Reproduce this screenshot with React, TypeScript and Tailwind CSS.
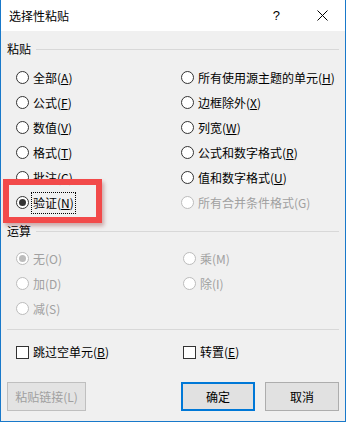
import React from "react";

const FONT = { fontFamily: '"Noto Sans CJK SC", "Noto Sans", sans-serif' };

type Item = { text: string; mnem?: string; checked?: boolean; disabled?: boolean; focus?: boolean };

function Label({ text, k }: { text: string; k?: string }) {
  if (!k) return <>{text}</>;
  return (
    <>
      {text}(<u className="underline-offset-[1px]">{k}</u>)
    </>
  );
}

function Radio({ text, mnem, checked, disabled, focus }: Item) {
  return (
    <div className="flex h-[25px] items-center">
      <span
        className={`flex h-[13px] w-[13px] shrink-0 items-center justify-center rounded-full border ${
          disabled ? "border-[#bcbcbc] bg-white" : "border-[#333333] bg-white"
        }`}
      >
        {checked && (
          <span className={`h-[7px] w-[7px] rounded-full ${disabled ? "bg-[#bcbcbc]" : "bg-[#333333]"}`} />
        )}
      </span>
      <span
        className={`ml-[3px] px-[1px] text-[12px] leading-[18px] ${disabled ? "text-[#a0a0a0]" : "text-black"} ${
          focus ? "py-[1px] outline outline-1 outline-dotted outline-black" : ""
        }`}
      >
        <Label text={text} k={mnem} />
      </span>
    </div>
  );
}

function Check({ text, mnem }: { text: string; mnem: string }) {
  return (
    <div className="flex h-[20px] items-center">
      <span className="h-[13px] w-[13px] shrink-0 border border-[#333333] bg-white" />
      <span className="ml-[4px] text-[12px] leading-[18px] text-black">
        <Label text={text} k={mnem} />
      </span>
    </div>
  );
}

function GroupLabel({ text }: { text: string }) {
  return (
    <div className="flex h-[16px] items-center pl-[6px] pr-[6px]">
      <span className="text-[12px] leading-[16px] text-black">{text}</span>
      <span className="ml-[5px] h-px flex-1 bg-[#d8d8d8]" />
    </div>
  );
}

export default function App() {
  return (
    <div className="relative flex h-[422px] w-[346px] flex-col border-x border-b border-[#1979ca] bg-[#f0f0f0]" style={FONT}>
      {/* title bar */}
      <div className="flex h-[31px] items-center bg-white pl-[8px]">
        <span className="text-[12px] leading-[16px] text-black">选择性粘贴</span>
        <span className="ml-auto text-[13px] leading-[16px] text-black" style={{ fontFamily: '"Liberation Sans", sans-serif' }}>
          ?
        </span>
        <svg className="ml-[37px] mr-[17px]" width="11" height="11" viewBox="0 0 11 11">
          <path d="M0.5 0.5 L10.5 10.5 M10.5 0.5 L0.5 10.5" stroke="#000" strokeWidth="1" />
        </svg>
      </div>

      <div className="pt-[10px]">
        <GroupLabel text="粘贴" />
      </div>

      <div className="mt-[8px] grid grid-cols-[165px_1fr] pl-[15px]">
        <div className="flex flex-col">
          <Radio text="全部" mnem="A" />
          <Radio text="公式" mnem="F" />
          <Radio text="数值" mnem="V" />
          <Radio text="格式" mnem="T" />
          <Radio text="批注" mnem="C" />
          <Radio text="验证" mnem="N" checked focus />
        </div>
        <div className="flex flex-col">
          <Radio text="所有使用源主题的单元" mnem="H" />
          <Radio text="边框除外" mnem="X" />
          <Radio text="列宽" mnem="W" />
          <Radio text="公式和数字格式" mnem="R" />
          <Radio text="值和数字格式" mnem="U" />
          <Radio text="所有合并条件格式(G)" disabled />
        </div>
      </div>

      <div className="mt-[8px]">
        <GroupLabel text="运算" />
      </div>

      <div className="mt-[7px] grid grid-cols-[167px_1fr] pl-[15px]">
        <div className="flex flex-col">
          <Radio text="无(O)" disabled checked />
          <Radio text="加(D)" disabled />
          <Radio text="减(S)" disabled />
        </div>
        <div className="flex flex-col">
          <Radio text="乘(M)" disabled />
          <Radio text="除(I)" disabled />
        </div>
      </div>

      <div className="mx-[6px] mt-[8px] h-px bg-[#d8d8d8]" />

      <div className="mt-[12px] grid grid-cols-[167px_1fr] pl-[15px]">
        <Check text="跳过空单元" mnem="B" />
        <Check text="转置" mnem="E" />
      </div>

      <div className="mt-[20px] flex items-center pl-[6px] pr-[6px]">
        <button className="h-[29px] w-[79px] border border-[#bfbfbf] bg-[#e3e3e3] text-[12px] text-[#a0a0a0]">
          粘贴链接(L)
        </button>
        <button className="ml-auto h-[29px] w-[74px] border-2 border-[#0078d7] bg-[#e1e1e1] text-[12px] text-black">
          确定
        </button>
        <button className="ml-[10px] h-[29px] w-[74px] border border-[#adadad] bg-[#e1e1e1] text-[12px] text-black">
          取消
        </button>
      </div>

      {/* annotation highlight */}
      <div className="pointer-events-none absolute left-[2px] top-[179px] h-[44px] w-[99px] border-[6px] border-[#f24a4a] shadow-[2px_3px_4px_rgba(120,0,0,0.3)]" />
    </div>
  );
}
